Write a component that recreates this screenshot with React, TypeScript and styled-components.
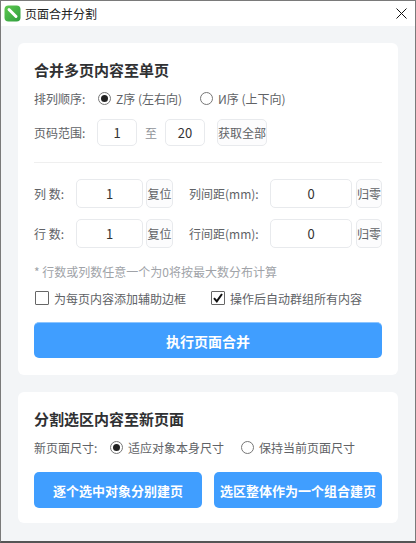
import styled, { createGlobalStyle } from "styled-components";

const GlobalStyle = createGlobalStyle`
  html, body { margin: 0; padding: 0; background: #fff; }
  * { box-sizing: border-box; }
`;

const Win = styled.div`
  width: 416px;
  height: 543px;
  display: flex;
  flex-direction: column;
  overflow: hidden;
  background: #f3f5f7;
  border: 1px solid #7a7a7a;
  border-bottom: 2px solid #555;
  font-family: "Noto Sans CJK SC", "Liberation Sans", sans-serif;
  font-size: 12px;
  color: #606266;
`;

const TitleBar = styled.div`
  height: 25px;
  flex: none;
  display: flex;
  align-items: center;
  padding: 0 8px 0 3px;
  background: #fff;
  color: #222;
`;

const AppTitle = styled.span`
  margin-left: 4px;
  flex: 1;
`;

const Body = styled.div`
  flex: 1;
  display: flex;
  flex-direction: column;
  gap: 17px;
  padding: 17px 17px 0;
`;

const Card = styled.section<{ $pb: number }>`
  background: #fff;
  border-radius: 6px;
  padding: 17px 16px ${(p) => p.$pb}px;
`;

const SectionTitle = styled.h2`
  margin: 0;
  height: 20px;
  font-size: 15px;
  line-height: 19px;
  font-weight: 700;
  color: #303133;
`;

const Row = styled.div<{ $top: number }>`
  display: flex;
  align-items: center;
  margin-top: ${(p) => p.$top}px;
`;

const Label = styled.span<{ $w: number; $ml?: number }>`
  width: ${(p) => p.$w}px;
  margin-left: ${(p) => p.$ml ?? 0}px;
  flex: none;
  white-space: nowrap;
`;

const Radio = styled.label<{ $w: number }>`
  width: ${(p) => p.$w}px;
  flex: none;
  height: 20px;
  display: flex;
  align-items: center;
  gap: 5px;
  white-space: nowrap;
`;

const RadioDot = styled.span<{ $on?: boolean }>`
  width: 13px;
  height: 13px;
  border-radius: 50%;
  border: 1px solid #777;
  background: #fff;
  display: flex;
  align-items: center;
  justify-content: center;
  &::after {
    content: "";
    width: 7px;
    height: 7px;
    border-radius: 50%;
    background: ${(p) => (p.$on ? "#222" : "transparent")};
  }
`;

const NumInput = styled.input<{ $w: number; $h?: number }>`
  width: ${(p) => p.$w}px;
  height: ${(p) => p.$h ?? 29}px;
  flex: none;
  padding: 0;
  border: 1px solid #e8eaed;
  border-radius: 5px;
  background: #fff;
  text-align: center;
  font: inherit;
  font-size: 13px;
  color: #333;
  outline: none;
`;

const To = styled.span`
  width: 28px;
  flex: none;
  text-align: center;
  color: #909399;
`;

const SmallBtn = styled.button<{ $w: number; $h?: number; $ml: number }>`
  width: ${(p) => p.$w}px;
  height: ${(p) => p.$h ?? 29}px;
  margin-left: ${(p) => p.$ml}px;
  flex: none;
  padding: 0;
  border: 1px solid #e8eaed;
  border-radius: 5px;
  background: #fcfcfd;
  font: inherit;
  color: #606266;
  white-space: nowrap;
  overflow: hidden;
`;

const Divider = styled.hr`
  height: 1px;
  margin: 16px 0 0;
  border: 0;
  background: #efefef;
`;

const Note = styled.div`
  height: 16px;
  margin-top: 16px;
  line-height: 16px;
  color: #a0a3a8;
`;

const CheckRow = styled.div`
  display: flex;
  align-items: center;
  height: 16px;
  margin-top: 10px;
`;

const Check = styled.label<{ $w: number }>`
  width: ${(p) => p.$w}px;
  flex: none;
  display: flex;
  align-items: center;
  gap: 5px;
  margin-left: 1px;
  white-space: nowrap;
`;

const Box = styled.span`
  width: 14px;
  height: 14px;
  flex: none;
  border: 1px solid #666;
  border-radius: 1px;
  background: #fff;
  display: flex;
  align-items: center;
  justify-content: center;
`;

const PrimaryBtn = styled.button<{ $size?: number }>`
  flex: 1;
  height: 36px;
  padding: 0;
  border: 0;
  border-radius: 5px;
  background: #409eff;
  color: #fff;
  font: inherit;
  font-size: ${(p) => p.$size ?? 13}px;
  font-weight: 700;
  white-space: nowrap;
`;

const BtnRow = styled.div`
  display: flex;
  gap: 12px;
  margin-top: 15px;
`;

const MergeBtn = styled(PrimaryBtn)`
  display: block;
  width: 100%;
  margin-top: 16px;
  border-top: 1px solid #8cc5ff;
`;

function AppIcon() {
  return (
    <svg width="17" height="17" viewBox="0 0 17 17">
      <defs>
        <linearGradient id="g" x1="0" y1="0" x2="1" y2="1">
          <stop offset="0" stopColor="#5fc94f" />
          <stop offset="1" stopColor="#2f9e3f" />
        </linearGradient>
      </defs>
      <rect x="0.5" y="0.5" width="16" height="16" rx="4" fill="url(#g)" />
      <path d="M5 4.5 L12 11.5" stroke="#fff" strokeWidth="3" strokeLinecap="round" />
    </svg>
  );
}

function CloseIcon() {
  return (
    <svg width="11" height="11" viewBox="0 0 11 11">
      <path d="M.5.5l10 10M10.5.5l-10 10" stroke="#111" strokeWidth="1" fill="none" />
    </svg>
  );
}

function Tick() {
  return (
    <svg width="12" height="12" viewBox="0 0 12 12">
      <path d="M2 6.2l2.8 3.2L10 2" stroke="#111" strokeWidth="2" fill="none" />
    </svg>
  );
}

export default function App() {
  return (
    <Win>
      <GlobalStyle />
      <TitleBar>
        <AppIcon />
        <AppTitle>页面合并分割</AppTitle>
        <CloseIcon />
      </TitleBar>
      <Body>
        <Card $pb={17}>
          <SectionTitle>合并多页内容至单页</SectionTitle>
          <Row $top={8}>
            <Label $w={64}>排列顺序:</Label>
            <Radio $w={102}><RadioDot $on />Z序 (左右向)</Radio>
            <Radio $w={100}><RadioDot />И序 (上下向)</Radio>
          </Row>
          <Row $top={11}>
            <Label $w={63}>页码范围:</Label>
            <NumInput $w={40} $h={27} defaultValue="1" />
            <To>至</To>
            <NumInput $w={40} $h={27} defaultValue="20" />
            <SmallBtn $w={50} $h={27} $ml={12}>获取全部</SmallBtn>
          </Row>
          <Divider />
          <Row $top={16}>
            <Label $w={42}>列 数:</Label>
            <NumInput $w={67} defaultValue="1" />
            <SmallBtn $w={27} $ml={3}>复位</SmallBtn>
            <Label $w={81} $ml={16}>列间距(mm):</Label>
            <NumInput $w={82} defaultValue="0" />
            <SmallBtn $w={26} $ml={4}>归零</SmallBtn>
          </Row>
          <Row $top={11}>
            <Label $w={42}>行 数:</Label>
            <NumInput $w={67} defaultValue="1" />
            <SmallBtn $w={27} $ml={3}>复位</SmallBtn>
            <Label $w={81} $ml={16}>行间距(mm):</Label>
            <NumInput $w={82} defaultValue="0" />
            <SmallBtn $w={26} $ml={4}>归零</SmallBtn>
          </Row>
          <Note>* 行数或列数任意一个为0将按最大数分布计算</Note>
          <CheckRow>
            <Check $w={175}><Box />为每页内容添加辅助边框</Check>
            <Check $w={170}><Box><Tick /></Box>操作后自动群组所有内容</Check>
          </CheckRow>
          <MergeBtn $size={14}>执行页面合并</MergeBtn>
        </Card>
        <Card $pb={15}>
          <SectionTitle>分割选区内容至新页面</SectionTitle>
          <Row $top={8}>
            <Label $w={76}>新页面尺寸:</Label>
            <Radio $w={131}><RadioDot $on />适应对象本身尺寸</Radio>
            <Radio $w={120}><RadioDot />保持当前页面尺寸</Radio>
          </Row>
          <BtnRow>
            <PrimaryBtn>逐个选中对象分别建页</PrimaryBtn>
            <PrimaryBtn>选区整体作为一个组合建页</PrimaryBtn>
          </BtnRow>
        </Card>
      </Body>
    </Win>
  );
}
